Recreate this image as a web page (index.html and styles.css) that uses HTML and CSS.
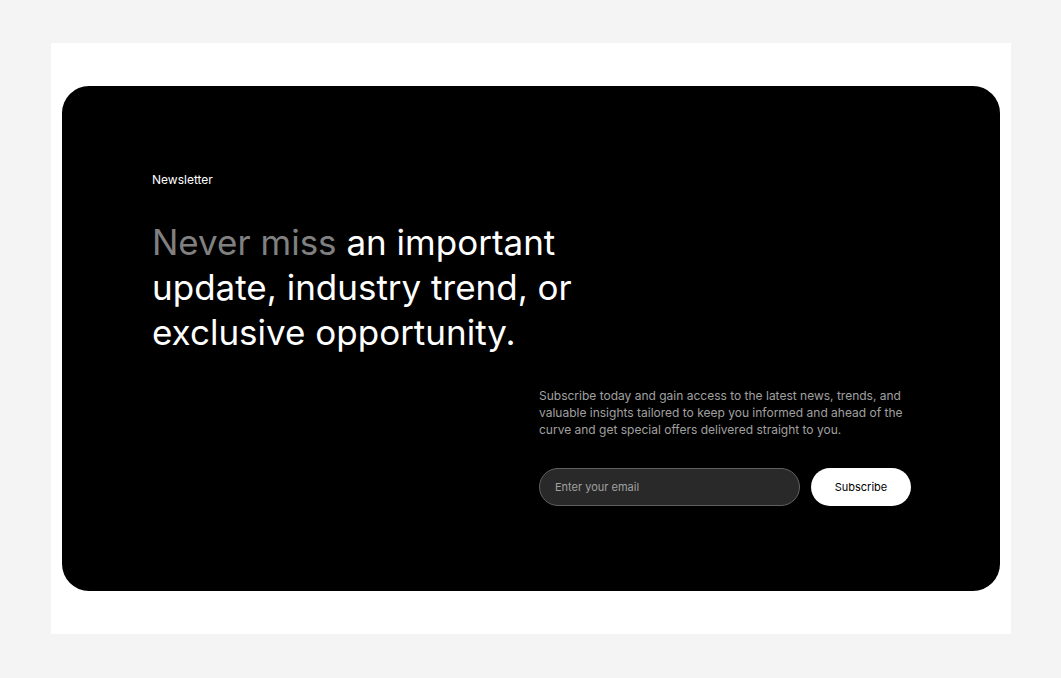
FILE: index.html
```html
<!DOCTYPE html>
<html lang="en">
<head>
    <meta charset="UTF-8">
    <meta name="viewport" content="width=device-width, initial-scale=1.0">
    <title>Newsletter</title>
    <link rel="stylesheet" href="styles.css">
</head>
<body>
    <main class="page">
        <section class="newsletter">
            <p class="eyebrow">Newsletter</p>
            <h2 class="title"><span class="muted">Never miss</span> an important update, industry trend, or exclusive opportunity.</h2>

            <div class="signup">
                <p class="description" id="signup-description">Subscribe today and gain access to the latest news, trends, and valuable insights tailored to keep you informed and ahead of the curve and get special offers delivered straight to you.</p>
                <form class="signup-form">
                    <input class="email-input" type="email" name="email" placeholder="Enter your email" aria-label="Enter your email" aria-describedby="signup-description">
                    <button class="subscribe-button" type="submit">Subscribe</button>
                </form>
            </div>
        </section>
    </main>
</body>
</html>
```
FILE: styles.css
```css
* {
    margin: 0;
    padding: 0;
    box-sizing: border-box;
}

body {
    font-family: Inter, sans-serif;
    background: #f4f4f4;
    min-height: 100vh;
    padding: 43px 50px 44px 51px;
}

.page {
    background: white;
    padding: 43px 11px;
}

.newsletter {
    background: black;
    color: white;
    border-radius: 27px;
    padding: 86px 89px 85px 90px;
}

.eyebrow {
    font-size: 12px;
    line-height: 16px;
}

.title {
    max-width: 440px;
    margin-top: 32px;
    font-size: 35px;
    font-weight: 400;
    line-height: 45px;
}

.muted {
    color: #808080;
}

.signup {
    max-width: 372px;
    margin-top: 32px;
    margin-left: auto;
}

.description {
    color: #a0a0a0;
    font-size: 12px;
    line-height: 17px;
}

.signup-form {
    display: flex;
    gap: 11px;
    margin-top: 30px;
}

.email-input,
.subscribe-button {
    height: 38px;
    border-radius: 19px;
    font-family: inherit;
    font-size: 11px;
}

.email-input {
    flex: 1;
    min-width: 0;
    padding: 0 15px;
    background: #292929;
    border: 1px solid #606060;
    color: white;
}

.email-input::placeholder {
    color: #a0a0a0;
}

.subscribe-button {
    width: 100px;
    background: white;
    border: none;
    color: black;
    cursor: pointer;
}
```
